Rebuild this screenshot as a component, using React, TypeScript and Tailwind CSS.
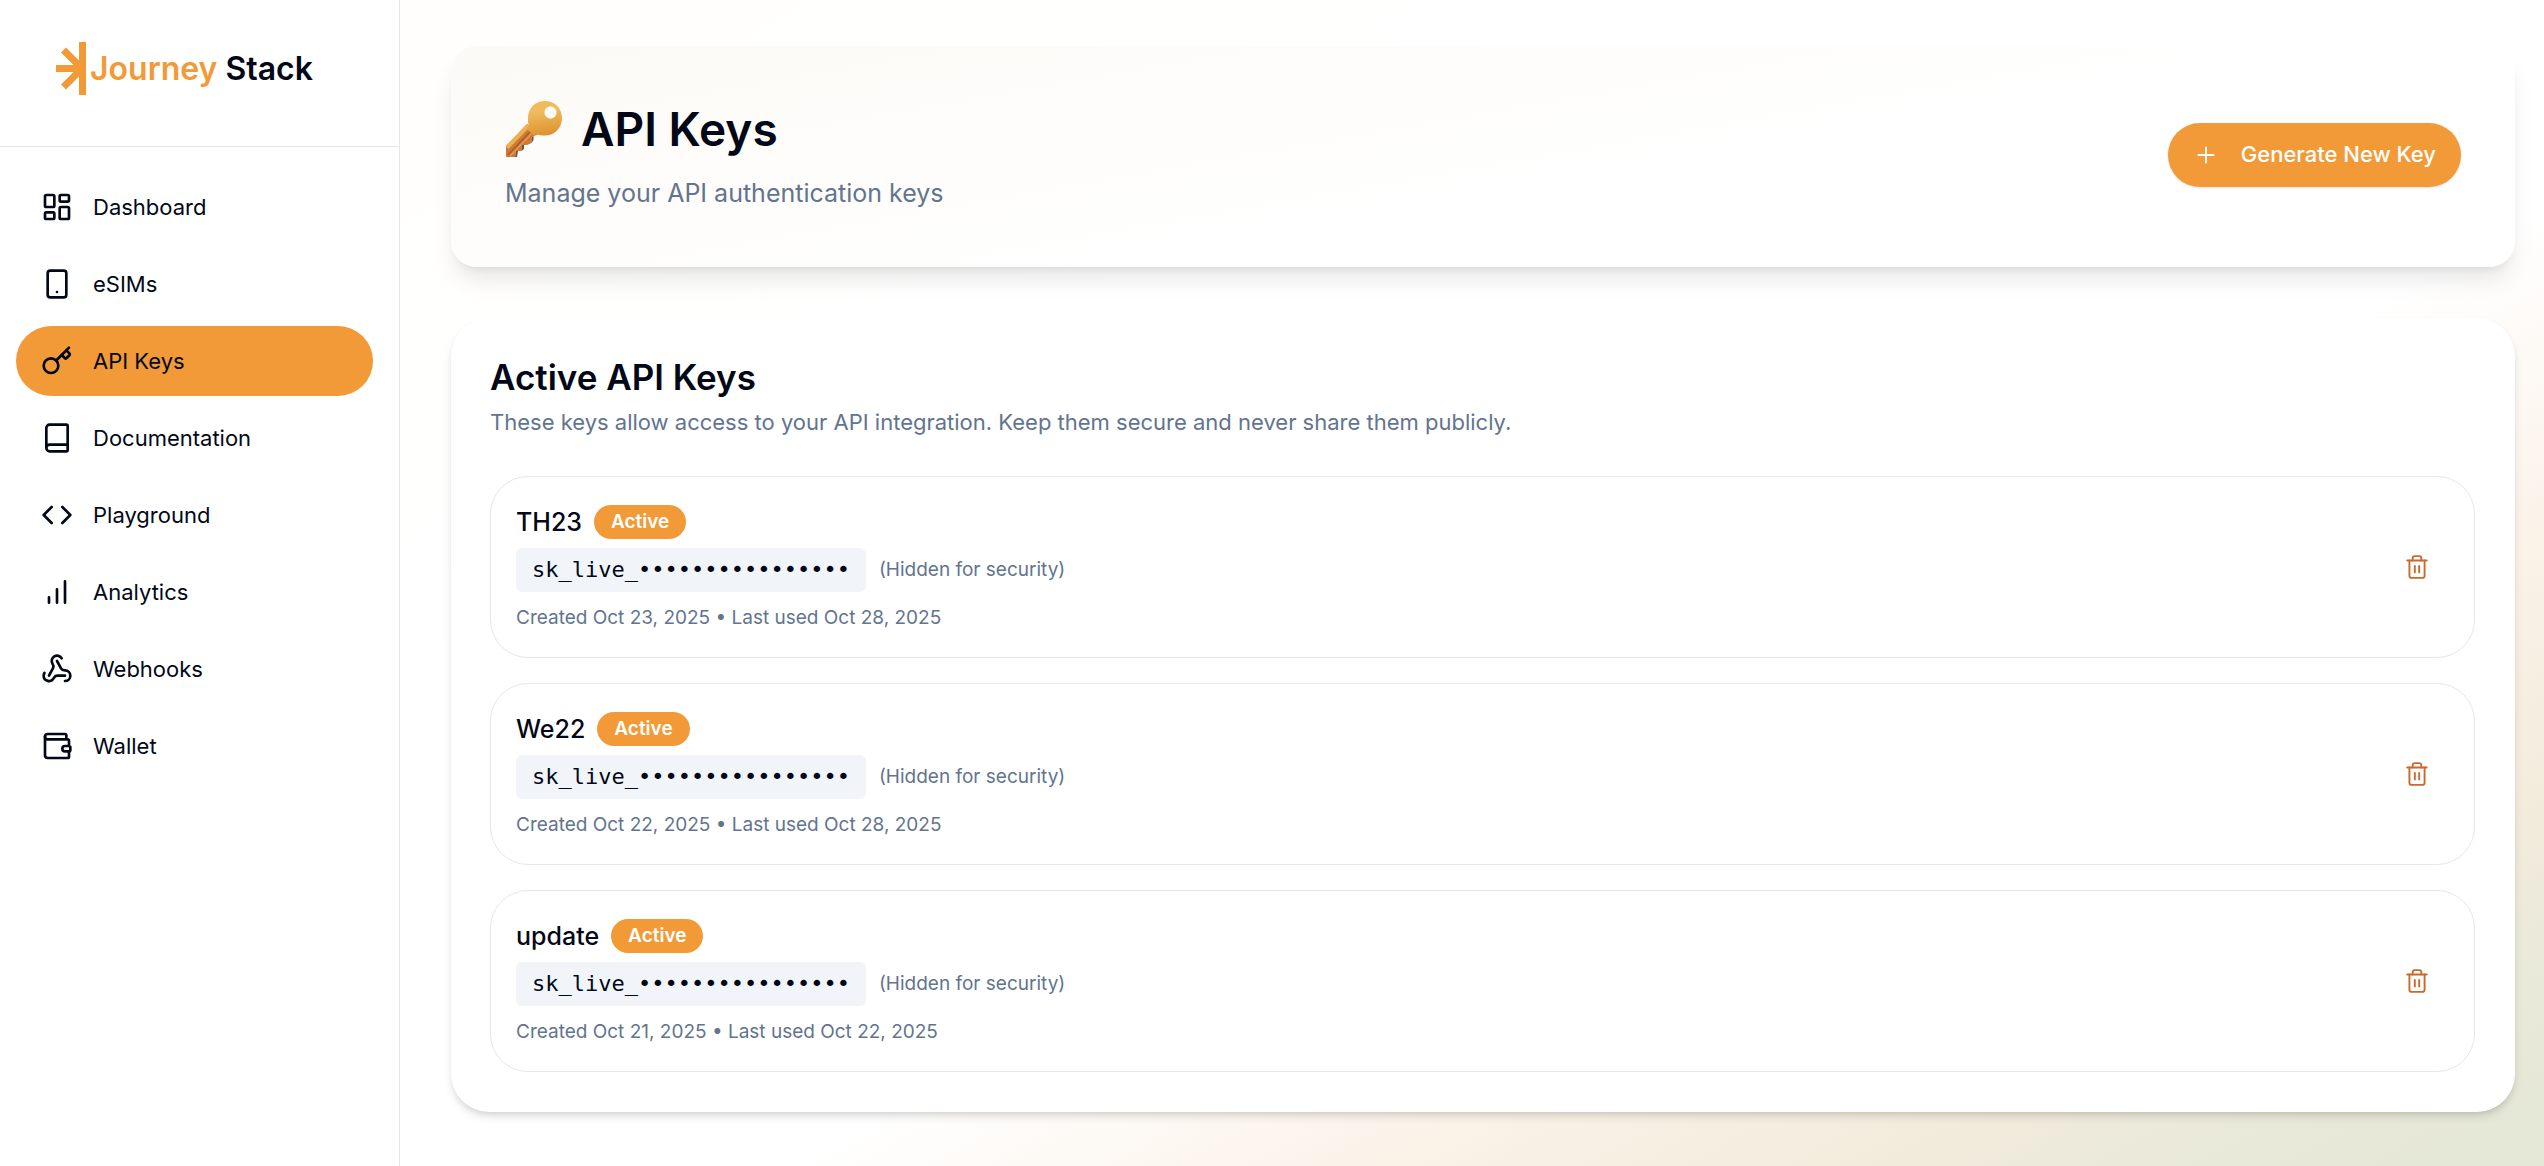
import React from "react";
import { LayoutDashboard, Smartphone, Key, Book, Code, Webhook, Wallet, Plus, Trash2 } from "lucide-react";

function BarsIcon({ className }: { className?: string }) {
  return (
    <svg viewBox="0 0 24 24" fill="none" stroke="currentColor" strokeWidth="2" strokeLinecap="round" className={className} aria-hidden="true">
      <path d="M6 20v-4M12 20V10M18 20V4" />
    </svg>
  );
}

function KeyEmoji({ className }: { className?: string }) {
  return (
    <svg viewBox="0 0 58 58" className={className} role="img" aria-label="Key">
      <defs>
        <linearGradient id="bow" x1="0" y1="0" x2="0.15" y2="1">
          <stop offset="0.35" stopColor="#efbb5c" />
          <stop offset="1" stopColor="#df9434" />
        </linearGradient>
      </defs>
      <path d="M22 24 L1 46 V57 H10 L11 51 H16.500 V45 L22 45 L26.500 43 V37 L34 34 Z" fill="#cf7833" />
      <path d="M23.500 25.500 L2 47.500" stroke="#eeb055" strokeWidth="4" />
      <path d="M26 31 L3 55" stroke="#a85a2b" strokeWidth="1.500" />
      <path d="M28 32 L5 56" stroke="#e39a45" strokeWidth="1.500" />
      <path d="M10 57 L11 51 H13 L12 57 Z M16.500 51 V45 H19 V49 Z M26.500 43 V37 L28.500 36 V40 Z" fill="#6d5340" />
      <path
        fillRule="evenodd"
        fill="url(#bow)"
        d="M40 1c9.700 0 17 7.300 17 17s-7.300 17.500-17 17.500c-3.500 0-6-.5-8.500-1.500l-3 1.500-6.500-6.500 1.500-4.500c-.5-2-.5-4-.5-6.500C23 8.300 30.300 1 40 1Zm5.500 5.500c-3.500 0-6 2.700-6 6s2.500 6 6 6 6-2.700 6-6-2.500-6-6-6Z"
      />
    </svg>
  );
}

function Logo() {
  return (
    <a href="#" className="flex items-center" aria-label="Journey Stack">
      <svg viewBox="0 0 30 53" className="h-[53px] w-[30px]" aria-hidden="true">
        <path d="M26.500 0v53M0 26.500h26M7.500 8L26 26.500L7.500 45" stroke="#f29a38" strokeWidth="7" fill="none" />
      </svg>
      <span className="ml-1 text-[32px] leading-[50px] font-semibold text-[#f29a38]">
        Journey <span className="text-[#020817]">Stack</span>
      </span>
    </a>
  );
}

const navItems = [
  { label: "Dashboard", icon: LayoutDashboard },
  { label: "eSIMs", icon: Smartphone },
  { label: "API Keys", icon: Key, active: true },
  { label: "Documentation", icon: Book },
  { label: "Playground", icon: Code },
  { label: "Analytics", icon: BarsIcon },
  { label: "Webhooks", icon: Webhook },
  { label: "Wallet", icon: Wallet },
];

const keys = [
  { name: "TH23", created: "Oct 23, 2025", used: "Oct 28, 2025" },
  { name: "We22", created: "Oct 22, 2025", used: "Oct 28, 2025" },
  { name: "update", created: "Oct 21, 2025", used: "Oct 22, 2025" },
];

export default function App() {
  return (
    <div className="flex min-h-screen bg-white font-['Inter',sans-serif] text-[#020817]">
      <aside className="w-[400px] shrink-0 border-r border-gray-200 bg-white">
        <div className="flex h-[147px] items-start border-b border-gray-200 pt-[42px] pl-14">
          <Logo />
        </div>
        <nav className="flex flex-col gap-[7px] pt-[25px] pr-[26px] pl-4">
          {navItems.map(({ label, icon: Icon, active }) => (
            <a
              key={label}
              href="#"
              aria-current={active ? "page" : undefined}
              className={`flex h-[70px] items-center gap-5 rounded-full px-[25px] text-[22px] ${active ? "bg-[#f29a38]" : ""}`}
            >
              <Icon className="size-8" />
              {label}
            </a>
          ))}
        </nav>
      </aside>

      <main className="flex min-w-0 flex-1 flex-col gap-[51px] bg-[linear-gradient(to_bottom_right,#fffefc_0%,#ffffff_30%,#ffffff_59%,#fbf2e8_73%,#f3ebdc_84%,#e8e9d9_92%,#e5e7d6_100%)] py-[46px] pr-[29px] pl-[51px]">
        <header className="flex h-[221px] items-center justify-between rounded-[26px] bg-[linear-gradient(170deg,#fcfaf6,#ffffff_60%)] px-[54px] pb-1 shadow-[0_16px_24px_-5px_rgba(0,0,0,0.1),0_6px_10px_-6px_rgba(0,0,0,0.1)]">
          <div>
            <h1 className="flex items-center gap-[18px] text-[46px] leading-[60px] font-semibold">
              <KeyEmoji className="size-[58px]" />
              API Keys
            </h1>
            <p className="mt-4 text-[25px] leading-9 text-slate-500">Manage your API authentication keys</p>
          </div>
          <button type="button" className="flex h-16 items-center rounded-full bg-[#f29a38] px-[25px] text-[22px] font-medium text-white shadow-sm">
            <Plus className="mr-[22px] size-[26px]" strokeWidth={1.75} />
            Generate New Key
          </button>
        </header>

        <section className="rounded-[38px] bg-white p-10 pt-[38px] pl-[39px] shadow-[0_6px_10px_-1px_rgba(0,0,0,0.1),0_3px_6px_-2px_rgba(0,0,0,0.1)]">
          <h2 className="text-[35px] leading-[42px] font-semibold">Active API Keys</h2>
          <p className="mt-2 text-[22px] leading-8 text-slate-500">
            These keys allow access to your API integration. Keep them secure and never share them publicly.
          </p>
          <ul className="mt-[38px] flex flex-col gap-[25px]">
            {keys.map((k) => (
              <li key={k.name} className="flex items-center justify-between rounded-[38px] border border-gray-200 p-[25px] pr-10">
                <div>
                  <div className="flex items-center gap-3">
                    <h3 className="text-[25px] leading-10 font-medium">{k.name}</h3>
                    <span className="rounded-full bg-[#f29a38] px-[17px] text-[19px] leading-[34px] font-semibold text-white">Active</span>
                  </div>
                  <div className="mt-1.5 flex items-center gap-[13px]">
                    <code className="rounded-md bg-slate-100 px-4 py-1.5 font-['DejaVu_Sans_Mono',monospace] text-[22px] leading-8">sk_live_••••••••••••••••</code>
                    <span className="text-[19px] text-slate-500">(Hidden for security)</span>
                  </div>
                  <p className="mt-3 text-[19px] leading-7 text-slate-500">
                    Created {k.created} • Last used {k.used}
                  </p>
                </div>
                <button type="button" aria-label={`Delete ${k.name}`} className="p-1 text-[#c96a2c]">
                  <Trash2 className="size-[26px]" strokeWidth={1.75} />
                </button>
              </li>
            ))}
          </ul>
        </section>
      </main>
    </div>
  );
}
